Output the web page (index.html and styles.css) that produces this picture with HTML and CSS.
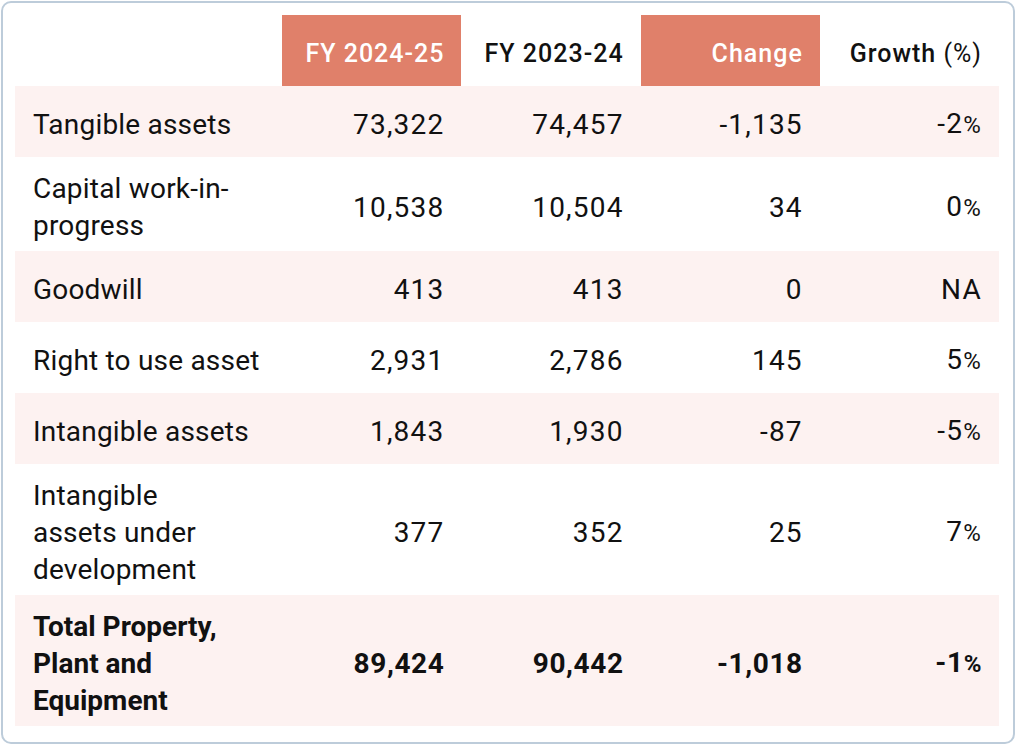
FILE: index.html
```html
<!DOCTYPE html>
<html lang="en">
<head>
<meta charset="utf-8">
<title>Property, Plant and Equipment</title>
<link rel="stylesheet" href="styles.css">
</head>
<body>
<div class="card">
  <table class="ppe">
    <colgroup>
      <col class="c-label">
      <col class="c-num">
      <col class="c-num">
      <col class="c-num">
      <col class="c-num">
    </colgroup>
    <thead>
      <tr>
        <th class="blank"></th>
        <th class="hl">FY 2024-25</th>
        <th>FY 2023-24</th>
        <th class="hl">Change</th>
        <th>Growth <span class="pct">(%)</span></th>
      </tr>
    </thead>
    <tbody>
      <tr class="tint">
        <td class="label">Tangible assets</td>
        <td>73,322</td><td>74,457</td><td>-1,135</td><td>-2<span class="pc">%</span></td>
      </tr>
      <tr>
        <td class="label">Capital work-in-progress</td>
        <td>10,538</td><td>10,504</td><td>34</td><td>0<span class="pc">%</span></td>
      </tr>
      <tr class="tint">
        <td class="label">Goodwill</td>
        <td>413</td><td>413</td><td>0</td><td>NA</td>
      </tr>
      <tr>
        <td class="label">Right to use asset</td>
        <td>2,931</td><td>2,786</td><td>145</td><td>5<span class="pc">%</span></td>
      </tr>
      <tr class="tint">
        <td class="label">Intangible assets</td>
        <td>1,843</td><td>1,930</td><td>-87</td><td>-5<span class="pc">%</span></td>
      </tr>
      <tr>
        <td class="label">Intangible<br>assets under development</td>
        <td>377</td><td>352</td><td>25</td><td>7<span class="pc">%</span></td>
      </tr>
      <tr class="tint total">
        <td class="label">Total Property, Plant and Equipment</td>
        <td>89,424</td><td>90,442</td><td>-1,018</td><td>-1<span class="pc">%</span></td>
      </tr>
    </tbody>
  </table>
</div>
</body>
</html>
```

FILE: styles.css
```css
html, body {
  margin: 0;
  padding: 0;
  background: #ffffff;
}

body {
  font-family: Roboto, "Liberation Sans", Arial, sans-serif;
  color: #111111;
}

.card {
  box-sizing: border-box;
  width: 1014px;
  height: 743px;
  margin: 1px 0 0 1px;
  border: 2px solid #bdccda;
  border-radius: 10px;
  padding: 12px 13px 13px 12px;
}

.ppe {
  border-collapse: collapse;
  border-spacing: 0;
  table-layout: fixed;
  width: 984px;
}

.c-label { width: 267px; }
.c-num { width: 179px; }

.ppe th,
.ppe td {
  padding: 13px 17px 7px 18px;
  text-align: right;
  vertical-align: middle;
  line-height: 37px;
}

.ppe th {
  height: 51px;
  font-size: 25px;
  font-weight: 500;
  letter-spacing: 1px;
  color: #111111;
}

.ppe th.hl {
  background: #e0806a;
  color: #ffffff;
}

.ppe th .pct {
  font-weight: 400;
}

.ppe td {
  height: 51px;
  font-size: 28px;
  letter-spacing: 1.2px;
  font-weight: 400;
}

.ppe td.label {
  text-align: left;
  letter-spacing: 0.2px;
  padding-right: 10px;
}

.ppe td .pc {
  font-size: 24px;
}

.ppe tr.tint td {
  background: #fdf2f1;
}

.ppe tr.total td {
  font-weight: 700;
  letter-spacing: 0.6px;
}

.ppe tr.total td.label {
  letter-spacing: 0;
}
```
